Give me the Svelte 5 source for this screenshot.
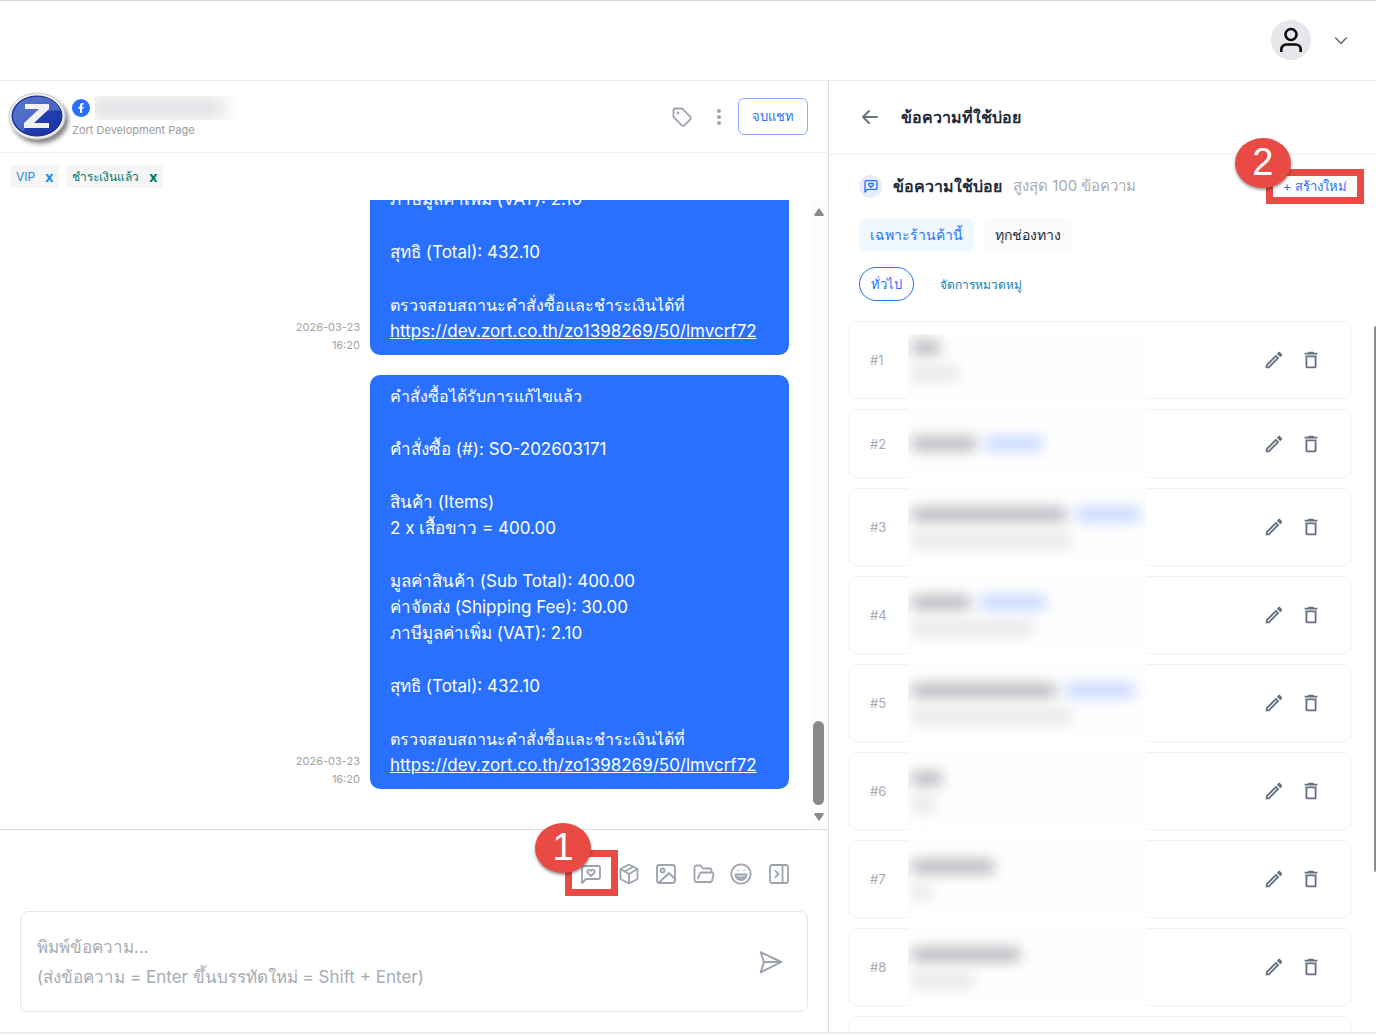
<script lang="ts">
  interface QuickMessage {
    id: number;
    title: number;
    tag?: number;
    detail?: number;
  }

  // title, tag and detail are the widths of the hidden texts
  const quickMessages: QuickMessage[] = [
    { id: 1, title: 28, detail: 48 },
    { id: 2, title: 64, tag: 56 },
    { id: 3, title: 154, tag: 64, detail: 160 },
    { id: 4, title: 58, tag: 66, detail: 122 },
    { id: 5, title: 144, tag: 68, detail: 160 },
    { id: 6, title: 30, detail: 24 },
    { id: 7, title: 82, detail: 20 },
    { id: 8, title: 108, detail: 62 },
    { id: 9, title: 0 }
  ];

  const orderUrl = 'https://dev.zort.co.th/zo1398269/50/lmvcrf72';

  const messages = [
    {
      date: '2026-03-23',
      time: '16:20',
      groups: [
        ['ภาษีมูลค่าเพิ่ม (VAT): 2.10'],
        ['สุทธิ (Total): 432.10'],
        ['ตรวจสอบสถานะคำสั่งซื้อและชำระเงินได้ที่']
      ]
    },
    {
      date: '2026-03-23',
      time: '16:20',
      groups: [
        ['คำสั่งซื้อได้รับการแก้ไขแล้ว'],
        ['คำสั่งซื้อ (#): SO-202603171'],
        ['สินค้า (Items)', '2 x เสื้อขาว = 400.00'],
        ['มูลค่าสินค้า (Sub Total): 400.00', 'ค่าจัดส่ง (Shipping Fee): 30.00', 'ภาษีมูลค่าเพิ่ม (VAT): 2.10'],
        ['สุทธิ (Total): 432.10'],
        ['ตรวจสอบสถานะคำสั่งซื้อและชำระเงินได้ที่']
      ]
    }
  ];

  const placeholder = 'พิมพ์ข้อความ...\n(ส่งข้อความ = Enter ขึ้นบรรทัดใหม่ = Shift + Enter)';

  let draft = $state('');
  let scope = $state('shop');
  let tags = $state([
    { name: 'VIP', color: 'blue' },
    { name: 'ชำระเงินแล้ว', color: 'green' }
  ]);

  function removeTag(name: string) {
    tags = tags.filter(t => t.name !== name);
  }

  function isThaiOnly(line: string): boolean {
    return !/[a-z]/i.test(line);
  }
</script>

{#snippet messageHeart()}
  <path d="M19.500 4h-15A1.500 1.500 0 0 0 3 5.500V21l4-4h12.500a1.500 1.500 0 0 0 1.500-1.500v-10A1.500 1.500 0 0 0 19.500 4z" />
  <path d="M12 14 8.900 10.900a1.800 1.800 0 0 1 2.600-2.600l.5.5.5-.5a1.800 1.800 0 0 1 2.600 2.600z" />
{/snippet}

<div class="shell">
  <header class="topbar">
    <button class="account" aria-label="Account">
      <span class="account-avatar">
        <svg width="28" height="28" viewBox="0 0 28 28">
          <circle cx="14" cy="8.500" r="5.500" />
          <path d="M4.300 26v-2.500a5 5 0 0 1 5-5h9.400a5 5 0 0 1 5 5V26" />
        </svg>
      </span>
      <svg class="chevron" width="20" height="20" viewBox="0 0 24 24"><path d="m5 9 7 7 7-7" /></svg>
    </button>
  </header>

  <main class="workspace">
    <section class="chat">
      <div class="chat-header">
        <svg class="page-logo" width="64" height="58" viewBox="0 0 64 58">
          <defs>
            <linearGradient id="logoBlue" x1="0" y1="0" x2="1" y2="1">
              <stop offset="0" stop-color="#3d62c4" />
              <stop offset="0.5" stop-color="#2442b0" />
              <stop offset="1" stop-color="#1a2fa0" />
            </linearGradient>
            <filter id="logoShadow" x="-20%" y="-20%" width="150%" height="150%">
              <feDropShadow dx="3" dy="4" stdDeviation="2" flood-color="#333" flood-opacity="0.6" />
            </filter>
          </defs>
          <ellipse cx="29" cy="26" rx="28" ry="23" fill="#eeeeec" stroke="#c9c9c9" filter="url(#logoShadow)" />
          <ellipse cx="29" cy="26" rx="25" ry="20" fill="url(#logoBlue)" stroke="#18278a" />
          <path d="M6 22C10 10 22 7 31 7c11 0 19 5 22 14-14-2-25 2-38 20C8 37 4 30 6 22z" fill="#7896dd" opacity="0.45" />
          <path d="M17 14h24v5L26 33h15v5H16v-5l15-14H17z" fill="#f1f1ef" />
        </svg>
        <div class="contact">
          <div class="contact-name">
            <svg width="18" height="18" viewBox="0 0 18 18">
              <circle cx="9" cy="9" r="9" fill="#2970ff" />
              <path d="M8 14V9.700H6.400V7.800H8V6.500C8 4.900 8.900 4 10.300 4h1.300v1.800h-.8c-.6 0-.9.300-.9.900v1.100h1.700l-.3 1.900H9.900V14z" fill="#fff" />
            </svg>
            <span class="redacted-name"><i></i></span>
          </div>
          <span class="page-name">Zort Development Page</span>
        </div>
        <div class="chat-actions">
          <button class="icon-btn" aria-label="Tag">
            <svg width="24" height="24" viewBox="0 0 24 24">
              <path d="M3.500 5v6.200c0 .6.200 1.100.6 1.500l7.500 7.500a2 2 0 0 0 2.900 0l5.700-5.700a2 2 0 0 0 0-2.900l-7.500-7.500c-.4-.4-.9-.6-1.500-.6H5A1.500 1.500 0 0 0 3.500 5z" />
              <circle cx="8" cy="8" r="0.5" />
            </svg>
          </button>
          <button class="icon-btn more" aria-label="More">
            <svg width="6" height="18" viewBox="0 0 6 18">
              <circle cx="3" cy="3" r="2" /><circle cx="3" cy="9" r="2" /><circle cx="3" cy="15" r="2" />
            </svg>
          </button>
          <button class="end-chat">จบแชท</button>
        </div>
      </div>

      <div class="tags">
        {#each tags as tag}
          <span class="tag {tag.color}">
            {tag.name}
            <button aria-label="Remove {tag.name}" onclick={() => removeTag(tag.name)}>x</button>
          </span>
        {/each}
      </div>

      <div class="history">
        <div class="messages">
          {#each messages as message}
            <div class="message">
              <time>{message.date}<br />{message.time}</time>
              <div class="bubble">
                {#each message.groups as group, i}
                  <p>
                    {#each group as line}
                      <span class:thai={isThaiOnly(line)}>{line}</span>
                    {/each}
                    {#if i === message.groups.length - 1}
                      <a href={orderUrl}>{orderUrl}</a>
                    {/if}
                  </p>
                {/each}
              </div>
            </div>
          {/each}
        </div>
        <div class="scrollbar">
          <svg width="10" height="8" viewBox="0 0 10 8"><path d="M5 0 10 7 9 8H1L0 7z" /></svg>
          <span class="thumb"></span>
          <svg width="10" height="8" viewBox="0 0 10 8"><path d="M5 8 0 1l1-1h8l1 1z" /></svg>
        </div>
      </div>

      <div class="composer">
        <div class="tools">
          <div class="marked">
            <button class="icon-btn" aria-label="Quick messages">
              <svg width="24" height="24" viewBox="0 0 24 24">{@render messageHeart()}</svg>
            </button>
            <span class="frame"></span>
            <span class="step">1</span>
          </div>
          <button class="icon-btn" aria-label="Products">
            <svg width="24" height="24" viewBox="0 0 24 24">
              <path d="m12 2.500 8.500 4.500v10L12 21.500 3.500 17V7zM12 12l8.500-5M12 12v9.500M12 12 3.500 7M16.200 4.800 7.700 9.500" />
            </svg>
          </button>
          <button class="icon-btn" aria-label="Image">
            <svg width="24" height="24" viewBox="0 0 24 24">
              <rect x="3" y="3" width="18" height="18" rx="2.500" />
              <circle cx="8.500" cy="8.500" r="2" />
              <path d="m5 20.500 10-9.500 6 6" />
            </svg>
          </button>
          <button class="icon-btn" aria-label="Files">
            <svg width="24" height="24" viewBox="0 0 24 24">
              <path d="M6 16.500 7.500 12a2 2 0 0 1 1.900-1.500H20a1.500 1.500 0 0 1 1.500 1.800l-1.400 6.200a2 2 0 0 1-2 1.500H4.500a2 2 0 0 1-2-2V5.500a2 2 0 0 1 2-2h4L11 6.500h6.500a2 2 0 0 1 2 2v2" />
            </svg>
          </button>
          <button class="icon-btn" aria-label="Emoji">
            <svg width="24" height="24" viewBox="0 0 24 24">
              <circle cx="12" cy="12" r="9.700" />
              <path d="M6.500 12.500h11a5.500 5.500 0 0 1-11 0zM8 15.500h8" />
              <path d="M9 8.500h.1M15 8.500h.1" stroke-width="1.400" />
            </svg>
          </button>
          <button class="icon-btn" aria-label="Toggle panel">
            <svg width="24" height="24" viewBox="0 0 24 24">
              <rect x="3" y="3" width="18" height="18" rx="2" />
              <path d="M15.500 3v18M8.500 9l3 3-3 3" />
            </svg>
          </button>
        </div>
        <div class="input-box">
          <textarea rows="2" aria-label="พิมพ์ข้อความ" {placeholder} bind:value={draft}></textarea>
          <button class="icon-btn send" aria-label="Send">
            <svg width="26" height="26" viewBox="0 0 24 24">
              <path d="M2.500 3 21.500 12l-19 9.500L5.500 12zM5.500 12h16" />
            </svg>
          </button>
        </div>
      </div>
    </section>

    <aside class="panel">
      <div class="panel-header">
        <button class="icon-btn back" aria-label="Back">
          <svg width="20" height="20" viewBox="0 0 20 20"><path d="M17 10H3M9 4l-6 6 6 6" /></svg>
        </button>
        <h1>ข้อความที่ใช้บ่อย</h1>
      </div>

      <div class="panel-top">
        <div class="title-row">
          <span class="title-icon">
            <svg width="16" height="16" viewBox="0 0 24 24">{@render messageHeart()}</svg>
          </span>
          <h2>ข้อความใช้บ่อย</h2>
          <span class="limit">สูงสุด 100 ข้อความ</span>
          <div class="marked create">
            <button class="create-btn">+ สร้างใหม่</button>
            <span class="frame"></span>
            <span class="step">2</span>
          </div>
        </div>
        <div class="scopes">
          <button class:active={scope === 'shop'} onclick={() => (scope = 'shop')}>เฉพาะร้านค้านี้</button>
          <button class:active={scope === 'all'} onclick={() => (scope = 'all')}>ทุกช่องทาง</button>
        </div>
        <div class="categories">
          <button class="chip">ทั่วไป</button>
          <button class="manage">จัดการหมวดหมู่</button>
        </div>
      </div>

      <div class="list-area">
        <div class="cards">
          {#each quickMessages as item}
            <article class="card" class:short={!item.detail}>
              {#if item.title}
                <span class="number">#{item.id}</span>
                <div class="redacted" class:first={item.id === 1}>
                  <div class="redacted-row">
                    <i class="dark" style="width: {item.title}px"></i>
                    {#if item.tag}
                      <i class="blue" style="width: {item.tag}px"></i>
                    {/if}
                  </div>
                  {#if item.detail}
                    <i class="light" style="width: {item.detail}px"></i>
                  {/if}
                </div>
                <div class="card-actions">
                  <button aria-label="Edit">
                    <svg width="22" height="22" viewBox="0 0 24 24"><path d="M14.060 9l.94.940L5.920 19H5v-.920L14.060 9m3.600-6c-.250 0-.510.100-.700.290l-1.830 1.830 3.750 3.750 1.830-1.830c.390-.390.390-1.040 0-1.410l-2.340-2.340c-.200-.200-.450-.290-.710-.290m-3.600 3.190L3 17.250V21h3.750L17.810 9.940l-3.750-3.750z" /></svg>
                  </button>
                  <button aria-label="Delete">
                    <svg width="22" height="22" viewBox="0 0 24 24"><path d="M6 19a2 2 0 0 0 2 2h8a2 2 0 0 0 2-2V7H6v12M8 9h8v10H8V9m7.500-5-1-1h-5l-1 1H5v2h14V4h-3.500z" /></svg>
                  </button>
                </div>
              {/if}
            </article>
          {/each}
        </div>
        <span class="list-thumb"></span>
      </div>
    </aside>
  </main>
</div>

<style>
  :global(body) {
    background: #fff;
  }

  .shell {
    display: flex;
    flex-direction: column;
    height: 100vh;
    box-sizing: border-box;
    border-top: 1px solid #d8d8d8;
    font-family: Inter, "Noto Sans", sans-serif;
    color: #1f2937;
  }

  .shell :global(*) {
    box-sizing: border-box;
  }

  button {
    padding: 0;
    border: none;
    background: none;
    font-family: inherit;
    cursor: pointer;
  }

  svg {
    display: block;
    flex: none;
  }

  h1,
  h2,
  p {
    margin: 0;
  }

  .topbar {
    flex: none;
    display: flex;
    align-items: center;
    justify-content: flex-end;
    height: 80px;
    padding: 0 25px 2px;
    border-bottom: 1px solid #eeeeee;
  }

  .account {
    display: flex;
    align-items: center;
    gap: 20px;
  }

  .account-avatar {
    display: flex;
    align-items: center;
    justify-content: center;
    width: 40px;
    height: 40px;
    border-radius: 50%;
    background: #e5e7eb;
  }

  .account svg {
    fill: none;
    stroke: #0a0a0a;
    stroke-width: 2.600;
  }

  .account .chevron {
    stroke: #6b7280;
    stroke-width: 2;
  }

  .workspace {
    flex: 1;
    min-height: 0;
    display: grid;
    grid-template-columns: minmax(0, 1fr) minmax(400px, 548px);
    margin-bottom: 1px;
    border-bottom: 2px solid #eeeeee;
  }

  .chat {
    display: flex;
    flex-direction: column;
    min-height: 0;
  }

  .chat-header {
    flex: none;
    display: flex;
    align-items: center;
    height: 72px;
    padding: 0 20px 0 8px;
    border-bottom: 1px solid #f0f0f0;
  }

  .page-logo {
    margin-top: 4px;
  }

  .contact {
    display: flex;
    flex-direction: column;
  }

  .contact-name {
    display: flex;
    align-items: center;
    gap: 5px;
    height: 26px;
  }

  .redacted-name {
    display: flex;
    align-items: center;
    width: 144px;
    height: 24px;
    overflow: hidden;
    background: linear-gradient(90deg, #f3f4f5, #f5f5f6 80%, #fff);
  }

  .redacted-name i {
    width: 128px;
    height: 10px;
    background: #d6d8dc;
    filter: blur(7px);
  }

  .page-name {
    font-size: 11px;
    line-height: 18px;
    color: #9b9b9b;
  }

  .chat-actions {
    display: flex;
    align-items: center;
    gap: 13px;
    margin-left: auto;
  }

  .icon-btn svg {
    fill: none;
    stroke: #9ca3af;
    stroke-width: 2;
    stroke-linejoin: round;
    stroke-linecap: round;
  }

  .chat-actions .icon-btn svg {
    stroke-width: 1.800;
  }

  .chat-actions .more {
    padding: 0 3px 0 9px;
  }

  .chat-actions .more svg {
    fill: #9ca3af;
    stroke: none;
  }

  .end-chat {
    height: 37px;
    padding: 0 13px;
    border: 1px solid #84adff;
    border-radius: 6px;
    background: #fff;
    color: #2970ff;
    font-size: 13px;
  }

  .tags {
    flex: none;
    display: flex;
    align-items: center;
    gap: 7px;
    height: 47px;
    padding: 0 10px;
  }

  .tag {
    display: flex;
    align-items: center;
    gap: 10px;
    height: 23px;
    padding: 0 6px;
    border-radius: 4px;
    background: #f5f5f5;
    font-size: 12px;
  }

  .tag button {
    color: inherit;
    font-family: "Open Sans", sans-serif;
    font-size: 14px;
    font-weight: 700;
  }

  .blue {
    color: #1e88e5;
  }

  .green {
    color: #00796b;
  }

  .history {
    flex: 1;
    min-height: 0;
    display: flex;
  }

  .messages {
    flex: 1;
    display: flex;
    flex-direction: column;
    justify-content: flex-end;
    gap: 20px;
    padding: 0 21px 40px 20px;
    overflow: hidden;
  }

  .message {
    display: flex;
    align-items: flex-end;
    justify-content: flex-end;
    gap: 10px;
  }

  time {
    padding-bottom: 1px;
    font-size: 11px;
    line-height: 18px;
    text-align: right;
    color: #a3a3a3;
  }

  .bubble {
    display: flex;
    flex-direction: column;
    gap: 27px;
    min-width: 419px;
    padding: 8px 20px 11px;
    border-radius: 10px;
    background: #2970ff;
    color: #fff;
    font-size: 17px;
    line-height: 26px;
  }

  .bubble span,
  .bubble a {
    display: block;
    color: inherit;
  }

  .bubble .thai {
    font-size: 16px;
  }

  .scrollbar {
    flex: none;
    display: flex;
    flex-direction: column;
    align-items: center;
    width: 17px;
    padding: 8px 0 7px;
    margin-right: 1px;
    margin-bottom: 1px;
    background: #fcfcfc;
  }

  .scrollbar svg {
    fill: #8a8a8a;
  }

  .thumb {
    width: 11px;
    height: 84px;
    margin-top: auto;
    margin-bottom: 8px;
    border-radius: 6px;
    background: #8a8a8a;
  }

  .composer {
    flex: none;
    padding: 32px 20px 20px;
    border-top: 1px solid #dcdcdc;
  }

  .tools {
    display: flex;
    justify-content: space-between;
    width: 212px;
    height: 24px;
    margin: 0 17px 25px auto;
  }

  .icon-btn {
    display: flex;
    align-items: center;
  }

  .tools svg {
    stroke-width: 1.800;
  }

  .marked {
    position: relative;
  }

  .frame {
    position: absolute;
    inset: -12px -15px -10px -14px;
    border: 7px solid #e94b44;
    pointer-events: none;
  }

  .step {
    position: absolute;
    left: -44px;
    top: -39px;
    width: 56px;
    height: 50px;
    border-radius: 50%;
    background: #e94b44;
    box-shadow: 0 2px 3px rgba(0, 0, 0, 0.4);
    color: #fff;
    font-family: "Liberation Sans", sans-serif;
    font-size: 38px;
    line-height: 48px;
    text-align: center;
    pointer-events: none;
  }

  .input-box {
    display: flex;
    align-items: center;
    padding: 20px 23px 19px 16px;
    border: 1px solid #e3e5e8;
    border-radius: 8px;
  }

  textarea {
    flex: 1;
    height: 60px;
    padding: 0;
    border: none;
    outline: none;
    resize: none;
    background: none;
    font-family: inherit;
    font-size: 17px;
    line-height: 30px;
    color: #1f2937;
  }

  textarea::placeholder {
    color: #a6abb5;
    opacity: 1;
  }

  .send svg {
    stroke-width: 1.800;
  }

  .panel {
    display: flex;
    flex-direction: column;
    min-height: 0;
    border-left: 1px solid #dcdcdc;
  }

  .panel-header {
    flex: none;
    display: flex;
    align-items: center;
    gap: 21px;
    height: 74px;
    padding: 0 31px 1px;
    border-bottom: 1px solid #f0f0f0;
  }

  .back svg {
    stroke: #6b7280;
    stroke-width: 2;
  }

  h1,
  h2 {
    font-size: 16px;
    line-height: 26px;
    font-weight: 700;
    color: #1f2937;
  }

  .panel-top {
    flex: none;
    display: flex;
    flex-direction: column;
    gap: 16px;
    padding: 15px 29px 20px 30px;
  }

  .title-row {
    display: flex;
    align-items: center;
    gap: 11px;
    height: 32px;
  }

  .title-icon {
    display: flex;
    align-items: center;
    justify-content: center;
    width: 23px;
    height: 23px;
    border-radius: 50%;
    background: #e8edfd;
  }

  .title-icon svg {
    fill: none;
    stroke: #2970ff;
    stroke-width: 2;
    stroke-linejoin: round;
  }

  .limit {
    font-size: 15px;
    color: #a6abb5;
  }

  .create {
    margin-left: auto;
  }

  .create-btn {
    display: block;
    height: 21px;
    color: #2970ff;
    font-size: 13px;
    line-height: 21px;
  }

  .create .frame {
    inset: -7px -17px;
  }

  .create .step {
    left: -48px;
    top: -38px;
  }

  .scopes,
  .categories {
    display: flex;
    align-items: center;
    gap: 10px;
  }

  .scopes button {
    height: 33px;
    padding: 0 11px;
    border-radius: 6px;
    background: #fafafb;
    color: #1f2937;
    font-size: 14px;
  }

  .scopes button.active {
    background: #eff8ff;
    color: #2970ff;
  }

  .categories {
    gap: 26px;
  }

  .chip {
    height: 34px;
    padding: 0 11px;
    border: 1px solid #2970ff;
    border-radius: 17px;
    color: #2970ff;
    font-size: 13px;
  }

  .manage {
    color: #0e86b4;
    font-size: 12px;
  }

  .list-area {
    flex: 1;
    min-height: 0;
    display: flex;
    justify-content: space-between;
  }

  .cards {
    flex: 1;
    display: flex;
    flex-direction: column;
    gap: 10px;
    padding: 0 23px 0 20px;
    overflow: hidden;
  }

  .list-thumb {
    flex: none;
    width: 2px;
    height: 546px;
    margin-top: 5px;
    border-radius: 2px 0 0 2px;
    background: #8a8a8a;
  }

  .card {
    flex: none;
    display: flex;
    align-items: center;
    min-height: 78px;
    padding: 0 28px 0 20px;
    border: 1px solid #f0f1f2;
    border-radius: 8px;
  }

  .card.short {
    min-height: 69px;
  }

  .number {
    width: 38px;
    font-size: 13px;
    color: #a3abb8;
  }

  /* covers the card's own borders as well as its texts */
  .redacted {
    align-self: stretch;
    display: flex;
    flex-direction: column;
    justify-content: center;
    gap: 13px;
    width: 239px;
    margin: -1px 0;
    overflow: hidden;
    background: #fefefe;
  }

  .redacted.first {
    margin-top: 12px;
    padding-bottom: 12px;
  }

  .redacted-row {
    display: flex;
    gap: 10px;
  }

  .redacted i {
    height: 13px;
    filter: blur(7px);
  }

  .redacted .dark {
    margin-left: 4px;
    background: #b0b2b7;
  }

  .redacted .blue {
    background: #bfd2ff;
  }

  .redacted .light {
    margin-left: 3px;
    background: #e2e3e6;
  }

  .card-actions {
    display: flex;
    gap: 15px;
    margin-left: auto;
  }

  .card-actions svg {
    fill: #667085;
  }
</style>
